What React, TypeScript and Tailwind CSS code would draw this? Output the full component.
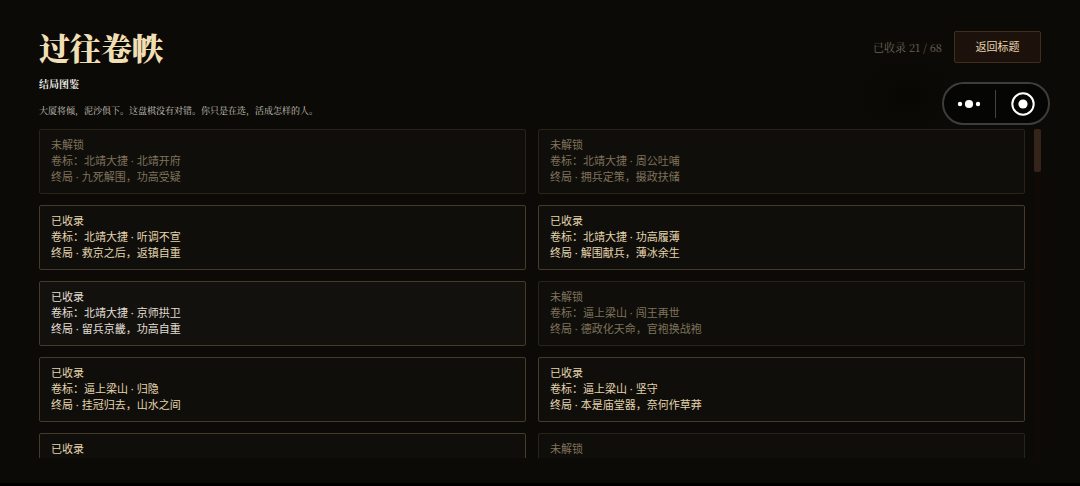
const serif = "font-['Noto_Serif_CJK_SC','Noto_Sans_CJK_SC',serif]";
const brush =
  "font-['KaiTi','STKaiti','Noto_Serif_CJK_SC','Noto_Sans_CJK_SC',serif]";

type Tone = "locked" | "open" | "fresh";

interface Ending {
  tone: Tone;
  mark: string;
  finale: string;
}

const endings: Ending[] = [
  { tone: "locked", mark: "北靖大捷 · 北靖开府", finale: "九死解围，功高受疑" },
  { tone: "locked", mark: "北靖大捷 · 周公吐哺", finale: "拥兵定策，摄政扶储" },
  { tone: "open", mark: "北靖大捷 · 听调不宣", finale: "救京之后，返镇自重" },
  { tone: "open", mark: "北靖大捷 · 功高履薄", finale: "解围献兵，薄冰余生" },
  { tone: "fresh", mark: "北靖大捷 · 京师拱卫", finale: "留兵京畿，功高自重" },
  { tone: "locked", mark: "逼上梁山 · 闯王再世", finale: "德政化天命，官袍换战袍" },
  { tone: "open", mark: "逼上梁山 · 归隐", finale: "挂冠归去，山水之间" },
  { tone: "open", mark: "逼上梁山 · 坚守", finale: "本是庙堂器，奈何作草莽" },
  { tone: "open", mark: "", finale: "" },
  { tone: "locked", mark: "", finale: "" },
];

const tones: Record<Tone, string> = {
  locked: "border-[#28241a] bg-[#0f0e0a] text-[#7f735a]",
  open: "border-[#453b28] bg-[#100e0b] text-[#e3d5ae]",
  fresh: "border-[#453b28] bg-[#12110e] text-[#e2dfd6]",
};

function EndingCard({ tone, mark, finale }: Ending) {
  return (
    <li className={`min-h-[65px] rounded-xs border px-[11px] py-[7px] ${tones[tone]}`}>
      <p>{tone === "locked" ? "未解锁" : "已收录"}</p>
      {mark && <p>卷标：{mark}</p>}
      {finale && <p>终局 · {finale}</p>}
    </li>
  );
}

function Capsule() {
  return (
    <div className="absolute top-[82px] right-[30px] flex h-[43px] w-[108px] items-center rounded-full border-2 border-[#3d3d3c] bg-[#050504]">
      <button type="button" aria-label="更多" className="flex h-full flex-1 items-center justify-center pr-px">
        <svg width="24" height="10" viewBox="0 0 24 10" fill="#fff" aria-hidden="true">
          <circle cx="3" cy="5" r="2.2" />
          <circle cx="12" cy="5" r="4.1" />
          <circle cx="21" cy="5" r="2.2" />
        </svg>
      </button>
      <span className="h-7 w-px bg-[#444443]" />
      <button type="button" aria-label="关闭" className="flex h-full flex-1 items-center justify-center pl-[3px]">
        <svg width="24" height="24" viewBox="0 0 24 24" aria-hidden="true">
          <circle cx="12" cy="12" r="10.7" fill="none" stroke="#fff" strokeWidth="2" />
          <circle cx="12" cy="12" r="4.6" fill="#fff" />
        </svg>
      </button>
    </div>
  );
}

export default function App() {
  return (
    <div className="relative flex h-screen flex-col border-b-3 border-black bg-[#0b0a07] bg-[radial-gradient(ellipse_50px_40px_at_84%_20%,#080704,transparent)] px-[39px] pt-[27px] pb-[25px] font-['Noto_Sans','Noto_Sans_CJK_SC',sans-serif]">
      <header>
        <div className="flex items-center justify-between">
          <h1 className={`text-[31px] leading-10 font-black text-[#f1dfb4] ${brush}`}>过往卷帙</h1>
          <div className="flex items-center gap-3">
            <span className={`text-[11px] text-[#6e6553] ${serif}`}>已收录 21 / 68</span>
            <button
              type="button"
              className="h-8 w-[87px] rounded-xs border border-[#3f301d] bg-[#1d110c] text-[11px] text-[#e3d5ae]"
            >
              返回标题
            </button>
          </div>
        </div>
        <h2 className={`mt-[9px] text-[10px] leading-4 font-bold text-[#f0eee8] ${serif}`}>结局图鉴</h2>
        <p className={`mt-[11px] text-[9px] leading-4 text-[#c8c5bd] ${serif}`}>
          大厦将倾，泥沙俱下。这盘棋没有对错。你只是在选，活成怎样的人。
        </p>
      </header>

      <main className="mt-[10px] flex min-h-0 flex-1 gap-[9px]">
        <ul className="grid min-h-0 flex-1 grid-cols-2 content-start gap-x-3 gap-y-[11px] overflow-y-auto text-[11px] leading-4 [scrollbar-width:none]">
          {endings.map((ending, i) => (
            <EndingCard key={i} {...ending} />
          ))}
        </ul>
        <div className="w-[7px] bg-[#100a07]" aria-hidden="true">
          <div className="h-[13%] rounded-xs bg-[#35241a]" />
        </div>
      </main>

      <Capsule />
    </div>
  );
}
